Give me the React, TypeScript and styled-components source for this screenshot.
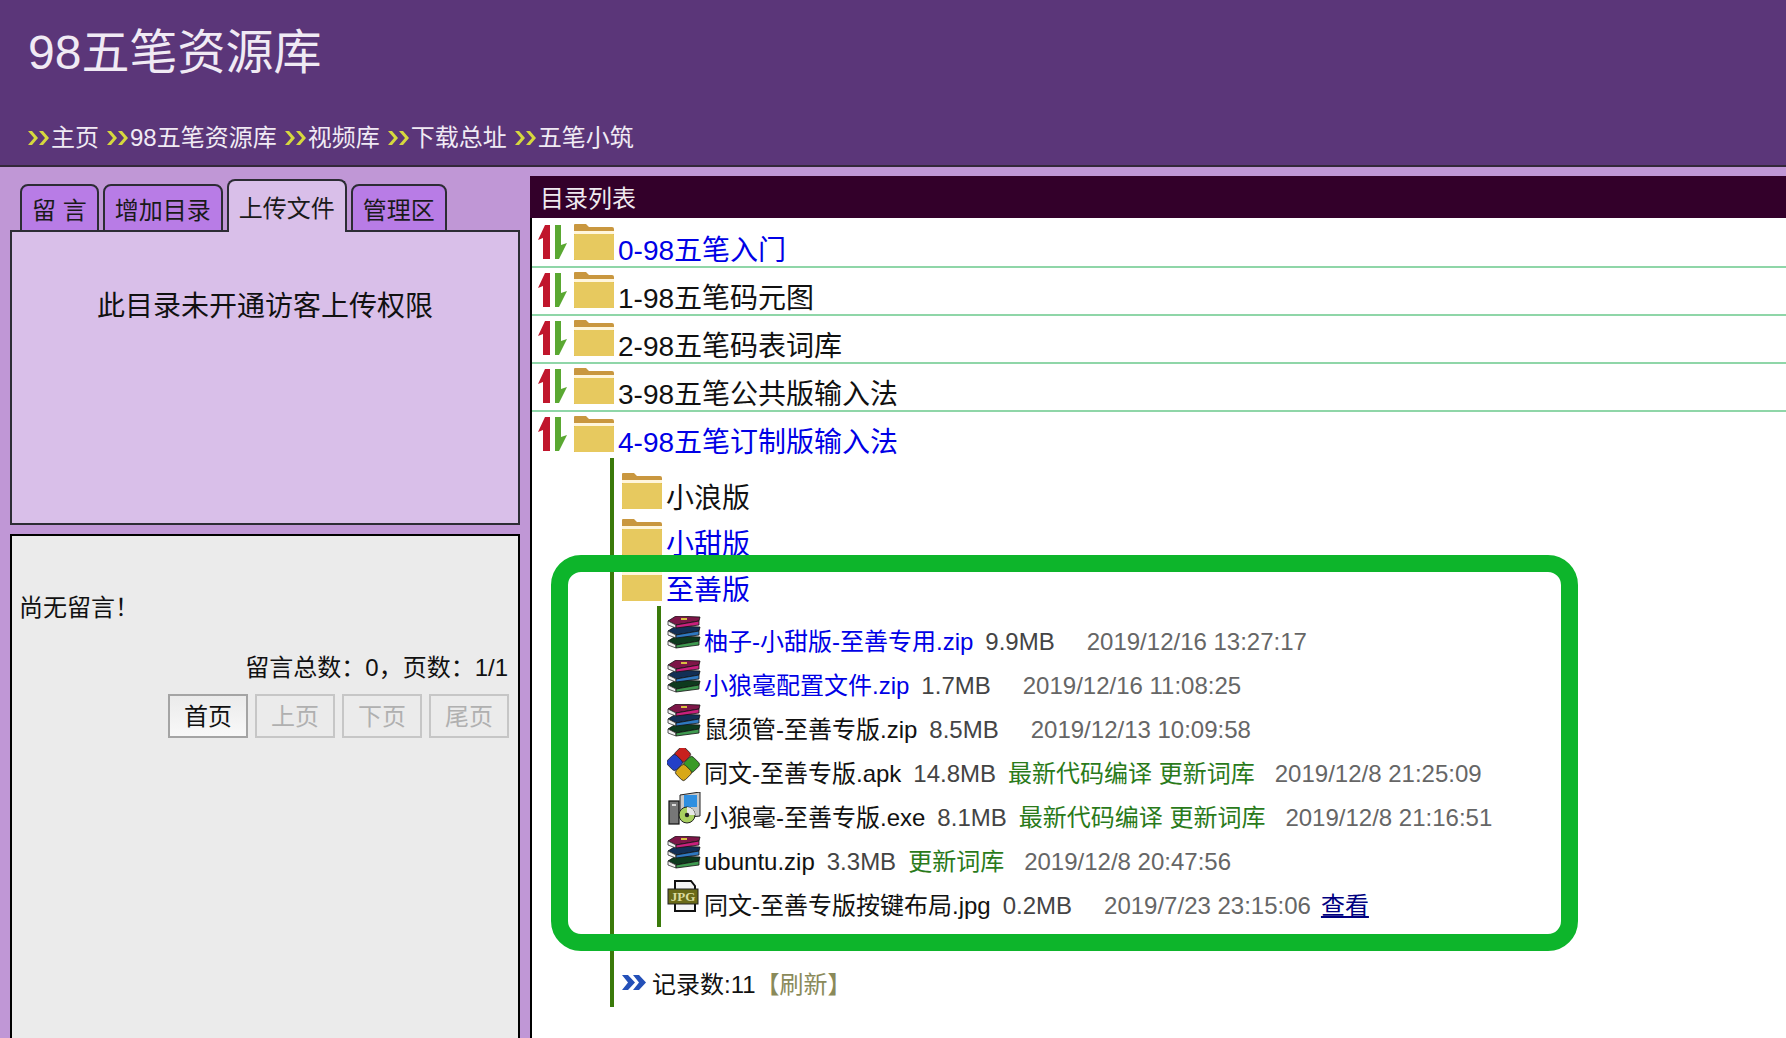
import { createGlobalStyle, styled } from "styled-components";

const GlobalStyle = createGlobalStyle`
    html, body {
        margin: 0;
        padding: 0;
        background: #c097d6;
    }
    * {
        box-sizing: border-box;
    }
    body {
        font-family: "Liberation Sans", "Noto Sans CJK SC", sans-serif;
    }
`;

const navItems = ["主页", "98五笔资源库", "视频库", "下载总址", "五笔小筑"];

const dirs = [
    { name: "0-98五笔入门", link: true },
    { name: "1-98五笔码元图", link: false },
    { name: "2-98五笔码表词库", link: false },
    { name: "3-98五笔公共版输入法", link: false },
    { name: "4-98五笔订制版输入法", link: true },
];

const subDirs = [
    { name: "小浪版", link: false },
    { name: "小甜版", link: true },
    { name: "至善版", link: true },
];

type FileKind = "zip" | "apk" | "exe" | "jpg";

const files: {
    kind: FileKind;
    name: string;
    size: string;
    note: string;
    date: string;
    link?: boolean;
    view?: boolean;
}[] = [
    { kind: "zip", name: "柚子-小甜版-至善专用.zip", size: "9.9MB", note: "", date: "2019/12/16 13:27:17", link: true },
    { kind: "zip", name: "小狼毫配置文件.zip", size: "1.7MB", note: "", date: "2019/12/16 11:08:25", link: true },
    { kind: "zip", name: "鼠须管-至善专版.zip", size: "8.5MB", note: "", date: "2019/12/13 10:09:58" },
    { kind: "apk", name: "同文-至善专版.apk", size: "14.8MB", note: "最新代码编译 更新词库", date: "2019/12/8 21:25:09" },
    { kind: "exe", name: "小狼毫-至善专版.exe", size: "8.1MB", note: "最新代码编译 更新词库", date: "2019/12/8 21:16:51" },
    { kind: "zip", name: "ubuntu.zip", size: "3.3MB", note: "更新词库", date: "2019/12/8 20:47:56" },
    { kind: "jpg", name: "同文-至善专版按键布局.jpg", size: "0.2MB", note: "", date: "2019/7/23 23:15:06", view: true },
];

const NavChevrons = () => (
    <svg width="24" height="16" viewBox="0 0 24 16">
        <path d="M1 1 L5 1 L11 8 L5 15 L1 15 L7 8 Z" fill="#d6d83e" />
        <path d="M12 1 L16 1 L22 8 L16 15 L12 15 L18 8 Z" fill="#d6d83e" />
    </svg>
);

const BlueChevrons = () => (
    <svg width="24" height="15" viewBox="0 0 24 15">
        <path d="M0 0 L6 0 L13 7.5 L6 15 L0 15 L6 7.5 Z" fill="#2450b8" />
        <path d="M11 0 L17 0 L24 7.5 L17 15 L11 15 L17 7.5 Z" fill="#2450b8" />
    </svg>
);

const SortArrows = () => (
    <svg width="32" height="37" viewBox="0 0 32 37">
        <path d="M8 2 L13 2 L13 36 L6 36 L6 15 L1 17 Z" fill="#c0162c" />
        <path d="M18 2 L24 2 L24 22 L30 20 L22 36 L18 36 Z" fill="#5aa832" />
    </svg>
);

const Folder = () => (
    <svg width="40" height="37" viewBox="0 0 40 37">
        <path d="M0 37 L0 2 Q0 1 1 1 L12 1 L15 4 L38 4 Q40 4 40 6 L40 36 Q40 37 39 37 Z" fill="#c9973f" />
        <rect x="0" y="8" width="40" height="3" fill="#fff6dc" />
        <rect x="0" y="11" width="40" height="26" rx="1" fill="#e7c95f" />
    </svg>
);

const ZipBook = ({ y, spine, cover }: { y: number; spine: string; cover: string }) => (
    <g transform={`translate(0 ${y})`}>
        <path d="M1 5 L9 0 L33 1 L32 5 L9 9 Z" fill={cover} stroke="#111" strokeWidth="0.8" />
        <path d="M1 5 L9 9 L9 12 L1 9 Z" fill="#f0f0f0" stroke="#333" strokeWidth="0.8" />
        <path d="M9 9 L32 5 L32 9 L9 12 Z" fill={spine} stroke="#111" strokeWidth="0.8" />
    </g>
);

const ZipIcon = () => (
    <svg width="34" height="34" viewBox="0 0 34 34">
        <ZipBook y={20} spine="#3f9a50" cover="#0e3a1e" />
        <ZipBook y={10} spine="#2f78c0" cover="#122f55" />
        <ZipBook y={0} spine="#c8207c" cover="#7d1648" />
        <rect x="14" y="2" width="6" height="2" fill="#d8c040" />
    </svg>
);

const ApkIcon = () => (
    <svg width="34" height="34" viewBox="0 0 34 34">
        <g stroke="#222" strokeWidth="0.8">
            <rect x="9" y="0" width="13" height="13" rx="3" transform="rotate(45 15.5 6.5)" fill="#c8201e" />
            <rect x="18" y="10" width="13" height="13" rx="3" transform="rotate(45 24.5 16.5)" fill="#3a9a28" />
            <rect x="1" y="8" width="13" height="13" rx="3" transform="rotate(45 7.5 14.5)" fill="#2440c8" />
            <rect x="10" y="18" width="13" height="13" rx="3" transform="rotate(45 16.5 24.5)" fill="#d8a818" />
        </g>
    </svg>
);

const ExeIcon = () => (
    <svg width="34" height="34" viewBox="0 0 34 34">
        <rect x="2" y="9" width="10" height="23" fill="#777" stroke="#111" strokeWidth="1.2" />
        <rect x="5" y="12" width="4" height="2" fill="#ddd" />
        <path d="M13 3 L33 0 L33 24 L13 26 Z" fill="#c8c8c8" stroke="#222" />
        <rect x="17" y="3" width="13" height="12" fill="#2f8fe0" />
        <circle cx="20" cy="23" r="8" fill="#a8d060" stroke="#222" />
        <path d="M20 15 A8 8 0 0 1 28 23 L20 23 Z" fill="#e8e8e8" />
        <circle cx="20" cy="23" r="2.2" fill="#222" />
    </svg>
);

const JpgIcon = () => (
    <svg width="32" height="34" viewBox="0 0 32 34">
        <path d="M8 1 L24 1 L28 6 L28 31 L8 31 Z" fill="#f4f4f4" stroke="#111" strokeWidth="2" />
        <rect x="1" y="9" width="30" height="15" fill="#6a6a18" stroke="#222" />
        <text x="16" y="21" textAnchor="middle" fontFamily="Liberation Serif, serif" fontWeight="700" fontSize="13" fill="#dcdca0">
            JPG
        </text>
    </svg>
);

const FileIcon = ({ kind }: { kind: FileKind }) => {
    if (kind === "apk") return <ApkIcon />;
    if (kind === "exe") return <ExeIcon />;
    if (kind === "jpg") return <JpgIcon />;
    return <ZipIcon />;
};

export default function App() {
    return (
        <Page>
            <GlobalStyle />
            <Header>
                <Title>98五笔资源库</Title>
                <Nav>
                    {navItems.map((item) => (
                        <NavItem key={item}>
                            <NavChevrons />
                            {item}
                        </NavItem>
                    ))}
                </Nav>
            </Header>
            <Body>
                <Sidebar>
                    <Tabs>
                        <Tab>留 言</Tab>
                        <Tab>增加目录</Tab>
                        <Tab $active>上传文件</Tab>
                        <Tab>管理区</Tab>
                    </Tabs>
                    <UploadPanel>此目录未开通访客上传权限</UploadPanel>
                    <MessagePanel>
                        <Empty>尚无留言！</Empty>
                        <Stats>留言总数：0，页数：1/1</Stats>
                        <Pager>
                            <PageButton>首页</PageButton>
                            <PageButton disabled>上页</PageButton>
                            <PageButton disabled>下页</PageButton>
                            <PageButton disabled>尾页</PageButton>
                        </Pager>
                    </MessagePanel>
                </Sidebar>
                <Main>
                    <MainTitle>目录列表</MainTitle>
                    <MainContent>
                        {dirs.map((dir, i) => (
                            <DirRow key={dir.name} $last={i === dirs.length - 1}>
                                <SortArrows />
                                <Folder />
                                <DirName $link={dir.link}>{dir.name}</DirName>
                            </DirRow>
                        ))}
                        <Tree>
                            {subDirs.map((dir) => (
                                <SubRow key={dir.name}>
                                    <Folder />
                                    <SubName $link={dir.link}>{dir.name}</SubName>
                                </SubRow>
                            ))}
                            <FileTree>
                                {files.map((file) => (
                                    <FileRow key={file.name}>
                                        <IconBox>
                                            <FileIcon kind={file.kind} />
                                        </IconBox>
                                        <FileName $link={file.link}>{file.name}</FileName>
                                        <FileSize>{file.size}</FileSize>
                                        <FileNote>{file.note}</FileNote>
                                        <FileDate>{file.date}</FileDate>
                                        {file.view && <ViewLink>查看</ViewLink>}
                                    </FileRow>
                                ))}
                            </FileTree>
                            <Footer>
                                <BlueChevrons />
                                <span>记录数:11</span>
                                <Refresh>【刷新】</Refresh>
                            </Footer>
                        </Tree>
                    </MainContent>
                </Main>
            </Body>
            <Highlight />
        </Page>
    );
}

const Page = styled.div`
    position: relative;
    width: 1786px;
    height: 1038px;
    overflow: hidden;
    background: #c097d6;
`;
const Header = styled.div`
    height: 167px;
    padding: 23px 0 0 27px;
    background: #5b3679;
    border-bottom: 2px solid #33283a;
    color: #f0eaf4;
`;
const Title = styled.div`
    padding-left: 1px;
    font-size: 48px;
    line-height: 60px;
`;
const Nav = styled.div`
    display: flex;
    gap: 7px;
    margin-top: 38px;
    font-size: 24px;
    line-height: 34px;
`;
const NavItem = styled.div`
    display: flex;
    align-items: center;
`;
const Body = styled.div`
    display: flex;
    align-items: flex-start;
`;
const Sidebar = styled.div`
    width: 530px;
    padding: 11px 10px 0 10px;
    flex-shrink: 0;
`;
const Tabs = styled.div`
    display: flex;
    align-items: flex-end;
    gap: 4px;
    height: 54px;
    padding-left: 10px;
    margin-bottom: -2px;
    position: relative;
    z-index: 1;
`;
const Tab = styled.div<{ $active?: boolean }>`
    height: ${(p) => (p.$active ? "53px" : "48px")};
    padding: 0 10px;
    display: flex;
    align-items: center;
    font-size: 24px;
    color: #1a1a1a;
    background: ${(p) => (p.$active ? "#d9bfe9" : "#b87ce6")};
    border: 2px solid #2c2c34;
    border-bottom: ${(p) => (p.$active ? "none" : "2px solid #2c2c34")};
    border-radius: 8px 8px 0 0;
`;
const UploadPanel = styled.div`
    height: 295px;
    padding-top: 55px;
    text-align: center;
    font-size: 28px;
    line-height: 40px;
    color: #111;
    background: #d9bfe9;
    border: 2px solid #2c2c34;
`;
const MessagePanel = styled.div`
    height: 560px;
    margin-top: 9px;
    padding: 55px 9px 0 7px;
    background: #ebebeb;
    border: 2px solid #000;
    color: #111;
    font-size: 24px;
`;
const Empty = styled.div`
    line-height: 34px;
`;
const Stats = styled.div`
    margin-top: 26px;
    padding-right: 1px;
    text-align: right;
    line-height: 34px;
`;
const Pager = styled.div`
    display: flex;
    justify-content: flex-end;
    gap: 7px;
    margin-top: 9px;
`;
const PageButton = styled.button`
    width: 80px;
    height: 44px;
    padding: 0 0 4px;
    font-family: inherit;
    font-size: 24px;
    color: #111;
    background: linear-gradient(#ebebeb, #f8f8f8);
    border: 2px solid #a4a4a4;
    &:disabled {
        color: #b0b0b0;
        background: #ebebeb;
        border-color: #c6c6c6;
    }
`;
const Main = styled.div`
    flex: 1;
    margin-top: 9px;
`;
const MainTitle = styled.div`
    height: 42px;
    padding: 6px 0 0 10px;
    font-size: 24px;
    line-height: 34px;
    color: #f0eaf0;
    background: #33002a;
`;
const MainContent = styled.div`
    height: 820px;
    padding-top: 2px;
    background: #fff;
    border-left: 2px solid #000;
`;
const DirRow = styled.div<{ $last?: boolean }>`
    display: flex;
    align-items: flex-start;
    height: ${(p) => (p.$last ? "46px" : "48px")};
    padding: 3px 0 0 5px;
    border-bottom: ${(p) => (p.$last ? "none" : "2px solid #8fd6a8")};
    svg:nth-child(2) {
        margin-left: 5px;
    }
`;
const DirName = styled.span<{ $link?: boolean }>`
    margin: 10px 0 0 4px;
    font-size: 28px;
    line-height: 36px;
    color: ${(p) => (p.$link ? "#0000e6" : "#111")};
`;
const Tree = styled.div`
    margin-left: 78px;
    padding: 6px 0 0 8px;
    height: 549px;
    border-left: 4px solid #3a7a0a;
`;
const SubRow = styled.div`
    display: flex;
    align-items: flex-start;
    height: 46px;
    svg {
        margin-top: 8px;
    }
`;
const SubName = styled.span<{ $link?: boolean }>`
    margin: 17px 0 0 4px;
    font-size: 28px;
    line-height: 36px;
    color: ${(p) => (p.$link ? "#0000e6" : "#111")};
`;
const FileTree = styled.div`
    margin: 4px 0 0 35px;
    padding: 10px 0 3px 6px;
    border-left: 4px solid #3a7a0a;
`;
const FileRow = styled.div`
    display: flex;
    align-items: flex-start;
    height: 44px;
    font-size: 24px;
    line-height: 34px;
`;
const IconBox = styled.div`
    width: 37px;
    height: 34px;
    flex-shrink: 0;
`;
const FileName = styled.span<{ $link?: boolean }>`
    margin-top: 9px;
    color: ${(p) => (p.$link ? "#0000e6" : "#111")};
`;
const FileSize = styled.span`
    margin: 9px 12px 0 12px;
    color: #444;
`;
const FileNote = styled.span`
    margin: 9px 20px 0 0;
    color: #2a7a1a;
`;
const FileDate = styled.span`
    margin-top: 9px;
    color: #666;
`;
const ViewLink = styled.span`
    margin: 9px 0 0 10px;
    color: #000080;
    text-decoration: underline;
`;
const Footer = styled.div`
    display: flex;
    align-items: center;
    gap: 6px;
    margin-top: 41px;
    font-size: 24px;
    line-height: 34px;
    color: #111;
    svg {
        margin-bottom: 6px;
    }
`;
const Refresh = styled.span`
    margin-left: -6px;
    color: #8a8a5a;
`;
const Highlight = styled.div`
    position: absolute;
    left: 551px;
    top: 555px;
    width: 1027px;
    height: 396px;
    border: 17px solid #0db52b;
    border-radius: 30px;
`;
